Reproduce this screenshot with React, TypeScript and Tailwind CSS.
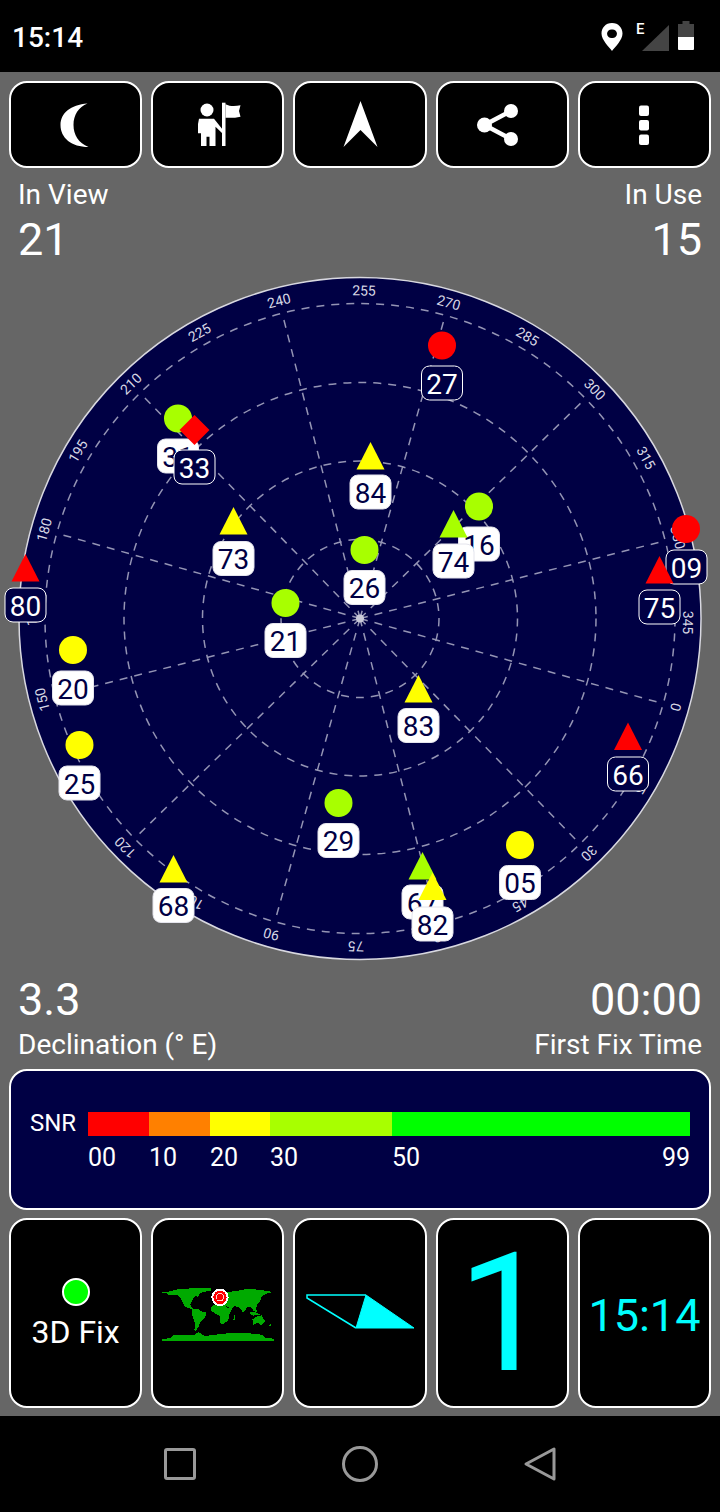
const NAVY = '#000044'
const CX = 360
const CY = 618.5

type Sat = { id: string; shape: 'circle' | 'tri' | 'diamond'; x: number; y: number; color: string; ly: number; lx?: number; dark?: boolean }

const RED = '#ff0000'
const YELLOW = '#ffff00'
const LIME = '#a8ff00'

// draw order matters, later ones sit on top
const sats: Sat[] = [
  { id: '31', shape: 'circle', x: 178, y: 418.5, color: LIME, ly: 456 },
  { id: '33', shape: 'diamond', x: 194.5, y: 430, color: RED, ly: 467, dark: true },
  { id: '27', shape: 'circle', x: 442, y: 345.5, color: RED, ly: 383, dark: true },
  { id: '84', shape: 'tri', x: 370.5, y: 442, color: YELLOW, ly: 492 },
  { id: '16', shape: 'circle', x: 479, y: 506.5, color: LIME, ly: 544 },
  { id: '74', shape: 'tri', x: 453.5, y: 510, color: LIME, ly: 561 },
  { id: '26', shape: 'circle', x: 364.5, y: 550, color: LIME, ly: 587.5 },
  { id: '73', shape: 'tri', x: 233.5, y: 507, color: YELLOW, ly: 558.5 },
  { id: '21', shape: 'circle', x: 285.5, y: 603, color: LIME, ly: 640.5 },
  { id: '80', shape: 'tri', x: 25.5, y: 554, color: RED, ly: 605, dark: true },
  { id: '09', shape: 'circle', x: 686, y: 529, color: RED, ly: 567, lx: 686.5, dark: true },
  { id: '75', shape: 'tri', x: 659.5, y: 556, color: RED, ly: 607, dark: true },
  { id: '20', shape: 'circle', x: 73, y: 650, color: YELLOW, ly: 688 },
  { id: '25', shape: 'circle', x: 79.5, y: 745, color: YELLOW, ly: 783 },
  { id: '83', shape: 'tri', x: 418.5, y: 675, color: YELLOW, ly: 725.5 },
  { id: '66', shape: 'tri', x: 628, y: 722.5, color: RED, ly: 774, dark: true },
  { id: '29', shape: 'circle', x: 338.5, y: 803, color: LIME, ly: 840.5 },
  { id: '68', shape: 'tri', x: 173.5, y: 855, color: YELLOW, ly: 905.5 },
  { id: '05', shape: 'circle', x: 520, y: 845, color: YELLOW, ly: 882.5 },
  { id: '67', shape: 'tri', x: 422.5, y: 852, color: LIME, ly: 902 },
  { id: '82', shape: 'tri', x: 432.5, y: 872.5, color: YELLOW, ly: 924 },
]

function SatMark({ s }: { s: Sat }) {
  const lx = s.lx ?? s.x
  return (
    <g>
      {s.shape === 'circle' && <circle cx={s.x} cy={s.y} r={14} fill={s.color} />}
      {s.shape === 'tri' && <polygon points={`${s.x},${s.y} ${s.x + 14},${s.y + 27.5} ${s.x - 14},${s.y + 27.5}`} fill={s.color} />}
      {s.shape === 'diamond' && <polygon points={`${s.x},${s.y - 15} ${s.x + 15},${s.y} ${s.x},${s.y + 15} ${s.x - 15},${s.y}`} fill={s.color} />}
      <rect x={lx - 20.5} y={s.ly - 17} width={41} height={34} rx={8} fill={s.dark ? NAVY : '#ffffff'} stroke={s.dark ? '#ffffff' : '#e4e4ec'} strokeWidth={1} />
      <text x={lx} y={s.ly + 10.5} textAnchor="middle" fontSize={28} fill={s.dark ? '#ffffff' : NAVY}>{s.id}</text>
    </g>
  )
}

function Radar() {
  const spokes = Array.from({ length: 12 }, (_, i) => i * 30)
  const bearings = Array.from({ length: 24 }, (_, i) => i * 15)
  return (
    <svg width={720} height={700} viewBox="0 270 720 700" className="block font-['Roboto',sans-serif]">
      <circle cx={CX} cy={CY} r={341} fill={NAVY} stroke="#d8d8e0" strokeWidth={1.5} />
      {[79, 157.5, 236, 315].map(r => (
        <circle key={r} cx={CX} cy={CY} r={r} fill="none" stroke="#9494b4" strokeWidth={1.5} strokeDasharray="8 7" />
      ))}
      {spokes.map(b => {
        const a = ((b + 15.7) * Math.PI) / 180
        return (
          <line key={b} x1={CX} y1={CY} x2={CX + 315 * Math.cos(a)} y2={CY + 315 * Math.sin(a)} stroke="#9494b4" strokeWidth={1.5} strokeDasharray="8 7" />
        )
      })}
      <circle cx={CX} cy={CY} r={4} fill="#c8c8d8" />
      {bearings.map(b => {
        const deg = b + 15.7
        const a = (deg * Math.PI) / 180
        const x = CX + 328 * Math.cos(a)
        const y = CY + 328 * Math.sin(a)
        return (
          <text key={b} x={x} y={y} textAnchor="middle" dominantBaseline="central" fontSize={14} fill="#d8d8e4" transform={`rotate(${deg + 90} ${x} ${y})`}>
            {b}
          </text>
        )
      })}
      {sats.map(s => <SatMark key={s.id} s={s} />)}
    </svg>
  )
}

function IconButton({ children }: { children: React.ReactNode }) {
  return (
    <div className="flex flex-1 items-center justify-center h-[87px] rounded-[18px] border-2 border-white bg-black">
      {children}
    </div>
  )
}

function Panel({ children }: { children?: React.ReactNode }) {
  return (
    <div className="flex flex-1 flex-col items-center justify-center h-[190px] rounded-[18px] border-2 border-white bg-black overflow-hidden">
      {children}
    </div>
  )
}

function WorldMap() {
  return (
    <svg width={116} height={62} viewBox="0 0 348 186" shapeRendering="crispEdges" className="ml-[1px]">
      <g fill="#00aa00">
        <path d="M5 30 L20 30 L40 25 L60 20 L80 21 L100 17 L150 17 L155 25 L130 30 L120 35 L112 45 L108 39 L100 50 L95 60 L90 68 L100 82 L85 78 L75 75 L68 60 L60 45 L50 38 L25 38 L20 33 L5 33 Z" />
        <path d="M95 82 L112 80 L125 88 L140 92 L135 108 L122 118 L115 135 L108 147 L103 145 L106 125 L98 105 Z" />
        <path d="M155 72 L172 66 L188 68 L205 78 L218 78 L208 98 L205 115 L190 125 L182 125 L178 100 L165 95 L153 85 Z" />
        <path d="M160 60 L170 35 L205 30 L240 25 L265 20 L310 25 L338 30 L320 35 L305 42 L300 60 L292 66 L288 80 L292 92 L280 86 L272 74 L262 76 L250 92 L240 78 L225 72 L212 80 L200 72 L188 70 L165 66 Z" />
        <path d="M265 92 L285 90 L300 98 L280 101 Z" />
        <path d="M277 112 L292 102 L305 100 L315 118 L305 130 L292 122 L280 128 Z" />
        <path d="M327 130 L335 125 L333 133 Z" />
        <path d="M222 100 L226 100 L224 114 L220 114 Z" />
        <path d="M5 172 L30 168 L40 160 L105 158 L115 150 L135 162 L190 155 L250 152 L305 158 L318 168 L342 170 L342 176 L5 176 Z" />
      </g>
      <circle cx={180} cy={46} r={26} fill="#ffffff" />
      <circle cx={180} cy={46} r={20} fill="#ff0000" />
      <circle cx={180} cy={46} r={11} fill="none" stroke="#ffd0d0" strokeWidth={3} />
    </svg>
  )
}

export default function App() {
  const snrStops = [
    { label: '00', w: 61, color: '#ff0000' },
    { label: '10', w: 61, color: '#ff8000' },
    { label: '20', w: 60, color: '#ffff00' },
    { label: '30', w: 122, color: '#a8ff00' },
    { label: '50', w: 298, color: '#00ff00' },
  ]

  return (
    <div className="w-[720px] h-[1512px] flex flex-col bg-[#666666] text-white font-['Roboto',sans-serif] overflow-hidden">
      {/* Status bar */}
      <div className="h-[72px] shrink-0 bg-black flex items-center justify-between pl-[12px] pr-[26px]">
        <span className="text-[28px] font-medium leading-none mb-[-4px]">15:14</span>
        <div className="flex items-center">
          <svg width={24} height={30} viewBox="0 0 24 30" className="mr-[12px] mb-[-1px]">
            <path fillRule="evenodd" fill="#ffffff" d="M12 1 C5.5 1 1.5 6 1.5 11.5 C1.5 18 9 25 12 29 C15 25 22.5 18 22.5 11.5 C22.5 6 18.5 1 12 1 Z M12 7.5 A4.3 4.3 0 1 1 12 16 A4.3 4.3 0 1 1 12 7.5 Z" />
          </svg>
          <svg width={34} height={30} viewBox="0 0 34 30" className="mr-[8px]">
            <polygon points="33,4 33,30 6,30" fill="#444444" />
            <text x={0} y={13} fontSize={15} fontWeight={500} fill="#ffffff">E</text>
          </svg>
          <svg width={16} height={30} viewBox="0 0 16 30">
            <rect x={4.5} y={0} width={7} height={4} fill="#444444" />
            <rect x={0} y={3} width={16} height={13} fill="#444444" />
            <path d="M0 16 H16 V28 Q16 29 15 29 H1 Q0 29 0 28 Z" fill="#ffffff" />
          </svg>
        </div>
      </div>

      {/* Toolbar */}
      <div className="shrink-0 flex gap-[9px] px-[9px] pt-[9px]">
        <IconButton>
          <svg width={64} height={64} viewBox="0 0 64 64">
            <path fill="#ffffff" d="M43.5 10.5 C26.5 12 16.5 20 16.5 32 C16.5 45 27.5 54 44.5 54 C34.5 50 29.5 42 29.5 32 C29.5 22 34.5 14 43.5 10.5 Z" />
          </svg>
        </IconButton>
        <IconButton>
          <svg width={64} height={64} viewBox="0 0 64 64">
            <g fill="#ffffff">
              <circle cx={21} cy={17} r={6.5} />
              <path d="M13 25.7 H28 L36 35.7 V40 L29.5 33.7 V53 H23.5 V43.7 H20.5 V53 H15 V40.3 H12 V31 Z" />
              <rect x={36} y={9.7} width={3.5} height={43.3} />
              <path d="M39.5 11.3 C44 13.5 49 13.5 54.5 12.3 L53 18 L54.5 23.7 C49 25 44 25 39.5 24.7 Z" />
            </g>
          </svg>
        </IconButton>
        <IconButton>
          <svg width={64} height={64} viewBox="0 0 64 64">
            <polygon points="32.5,8 49.5,54 32.5,37 15.5,54" fill="#ffffff" />
          </svg>
        </IconButton>
        <IconButton>
          <svg width={64} height={64} viewBox="0 0 64 64" className="ml-[2px]">
            <path d="M40 18 L13.5 32 L40 46" fill="none" stroke="#ffffff" strokeWidth={4.5} />
            <circle cx={13.5} cy={32} r={7.5} fill="#ffffff" />
            <circle cx={40} cy={18} r={7} fill="#ffffff" />
            <circle cx={40} cy={46} r={7} fill="#ffffff" />
          </svg>
        </IconButton>
        <IconButton>
          <svg width={64} height={64} viewBox="0 0 64 64">
            <g fill="#ffffff">
              <rect x={27} y={12.5} width={10} height={10.5} rx={2} />
              <rect x={27} y={27} width={10} height={10.5} rx={2} />
              <rect x={27} y={41.5} width={10} height={10.5} rx={2} />
            </g>
          </svg>
        </IconButton>
      </div>

      {/* In view / in use */}
      <div className="h-[102px] shrink-0 flex justify-between px-[18px] pt-[10px]">
        <div className="flex flex-col">
          <span className="text-[28px] leading-[34px]">In View</span>
          <span className="text-[45px] leading-[56px]">21</span>
        </div>
        <div className="flex flex-col items-end">
          <span className="text-[28px] leading-[34px]">In Use</span>
          <span className="text-[45px] leading-[56px]">15</span>
        </div>
      </div>

      <div className="h-[700px] shrink-0">
        <Radar />
      </div>

      {/* Declination / first fix */}
      <div className="h-[99px] shrink-0 flex justify-between px-[18px] pt-[1px]">
        <div className="flex flex-col">
          <span className="text-[45px] leading-[57px]">3.3</span>
          <span className="text-[28px] leading-[34px]">Declination (° E)</span>
        </div>
        <div className="flex flex-col items-end">
          <span className="text-[45px] leading-[57px]">00:00</span>
          <span className="text-[28px] leading-[34px]">First Fix Time</span>
        </div>
      </div>

      {/* SNR legend */}
      <div className="mx-[9px] h-[141px] shrink-0 rounded-[18px] border-2 border-white bg-[#000044] pt-[41px] pl-[19px]">
        <div className="flex items-center">
          <span className="w-[58px] text-[24px] leading-[24px] mt-[-3px]">SNR</span>
          <div className="flex h-[24px]">
            {snrStops.map(s => (
              <div key={s.label} className="h-full" style={{ width: s.w, backgroundColor: s.color }} />
            ))}
          </div>
        </div>
        <div className="flex ml-[58px] mt-[8px] w-[602px] text-[25px] leading-[28px]">
          {snrStops.slice(0, 4).map(s => (
            <span key={s.label} className="shrink-0" style={{ width: s.w }}>{s.label}</span>
          ))}
          <div className="flex flex-1 justify-between">
            <span>50</span>
            <span>99</span>
          </div>
        </div>
      </div>

      {/* Bottom panels */}
      <div className="shrink-0 flex gap-[9px] px-[9px] pt-[8px]">
        <Panel>
          <div className="w-[28px] h-[28px] rounded-full border-2 border-white bg-[#00ff00] mt-[2px]" />
          <span className="text-[32px] leading-[36px] mt-[8px]">3D Fix</span>
        </Panel>
        <Panel>
          <WorldMap />
        </Panel>
        <Panel>
          <svg width={130} height={60} viewBox="0 0 130 60" className="mt-[13px] ml-[16px]">
            <polygon points="63,5 111,38 53,38" fill="#00ffff" stroke="#00ffff" strokeWidth={1} />
            <path d="M63 5 H4 V8 L53 38" fill="none" stroke="#00ffff" strokeWidth={1.5} />
          </svg>
        </Panel>
        <Panel>
          <span className="text-[165px] leading-none text-[#00ffff] ml-[4px]">1</span>
        </Panel>
        <Panel>
          <span className="text-[45px] leading-none text-[#00ffff] mt-[4px]">15:14</span>
        </Panel>
      </div>

      {/* Nav bar */}
      <div className="mt-[8px] flex-1 bg-black flex items-center justify-center">
        <div className="flex w-full items-center justify-center gap-[120px] pb-[1px]">
          <svg width={60} height={40} viewBox="0 0 60 40">
            <rect x={15.5} y={5.5} width={29} height={29} rx={1.5} fill="none" stroke="#999999" strokeWidth={3} />
          </svg>
          <svg width={60} height={40} viewBox="0 0 60 40">
            <circle cx={30} cy={20} r={16.5} fill="none" stroke="#999999" strokeWidth={3} />
          </svg>
          <svg width={60} height={40} viewBox="0 0 60 40">
            <polygon points="16,20 44,5 44,35" fill="none" stroke="#999999" strokeWidth={3} strokeLinejoin="round" />
          </svg>
        </div>
      </div>
    </div>
  )
}
